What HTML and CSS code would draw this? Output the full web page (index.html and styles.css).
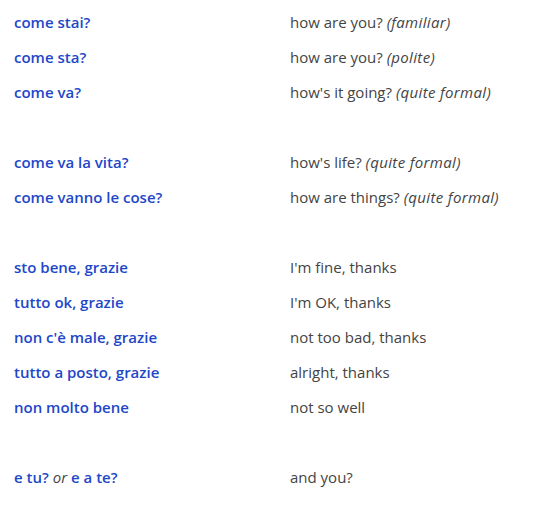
FILE: index.html
```html
<!DOCTYPE html>
<html>
<head>
<meta charset="utf-8">
<link rel="stylesheet" href="styles.css">
</head>
<body>
<table class="phrases">
<tr><td class="it">come stai?</td><td class="en">how are you? <i>(familiar)</i></td></tr>
<tr><td class="it">come sta?</td><td class="en">how are you? <i>(polite)</i></td></tr>
<tr><td class="it">come va?</td><td class="en">how's it going? <i>(quite formal)</i></td></tr>
<tr class="gap"><td></td><td></td></tr>
<tr><td class="it">come va la vita?</td><td class="en">how's life? <i>(quite formal)</i></td></tr>
<tr><td class="it">come vanno le cose?</td><td class="en">how are things? <i>(quite formal)</i></td></tr>
<tr class="gap"><td></td><td></td></tr>
<tr><td class="it">sto bene, grazie</td><td class="en">I'm fine, thanks</td></tr>
<tr><td class="it">tutto ok, grazie</td><td class="en">I'm OK, thanks</td></tr>
<tr><td class="it">non c'è male, grazie</td><td class="en">not too bad, thanks</td></tr>
<tr><td class="it">tutto a posto, grazie</td><td class="en">alright, thanks</td></tr>
<tr><td class="it">non molto bene</td><td class="en">not so well</td></tr>
<tr class="gap"><td></td><td></td></tr>
<tr><td class="it">e tu? <i class="or">or</i> e a te?</td><td class="en">and you?</td></tr>
</table>
</body>
</html>
```
FILE: styles.css
```css
body {
  margin: 0;
  background: #fff;
  font-family: "Open Sans", sans-serif;
  font-size: 15px;
}
.phrases {
  border-collapse: collapse;
  margin: 4px 0 0 6px;
}
.phrases td {
  height: 35px;
  padding: 0 8px;
  vertical-align: middle;
  line-height: 20px;
}
.it {
  width: 260px;
  color: #1e47c8;
  font-weight: 600;
}
.en {
  color: #444;
}
.en i {
  letter-spacing: 0.35px;
}
.or {
  font-weight: 400;
  color: #444;
}
```
